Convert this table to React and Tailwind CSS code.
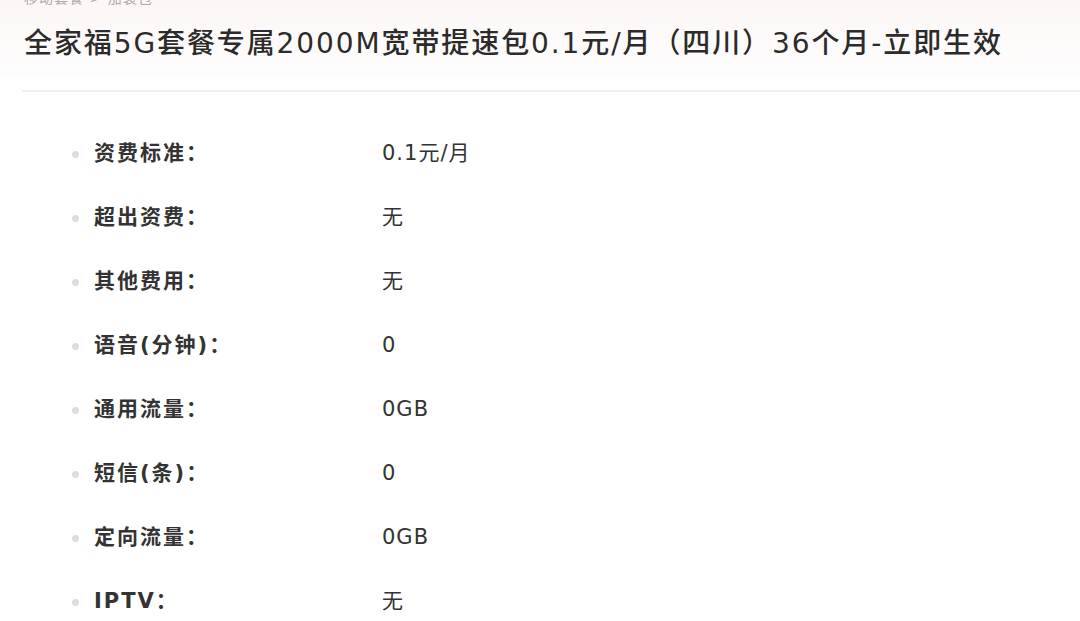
import React from 'react';

const rows = [
  { label: '资费标准：', value: '0.1元/月' },
  { label: '超出资费：', value: '无' },
  { label: '其他费用：', value: '无' },
  { label: '语音(分钟)：', value: '0' },
  { label: '通用流量：', value: '0GB' },
  { label: '短信(条)：', value: '0' },
  { label: '定向流量：', value: '0GB' },
  { label: 'IPTV：', value: '无' },
];

function App() {
  return (
    <div
      className="w-[1080px] h-[621px] overflow-hidden bg-white text-[#333]"
      style={{ fontFamily: '"DejaVu Sans", "Noto Sans CJK SC", sans-serif' }}
    >
      {/* Header */}
      <div className="h-[90px] bg-gradient-to-b from-[#fcf6f4] to-[#fefdfd] pl-[24px] -mt-[12px]">
        <div className="text-[14px] leading-[20px] text-[#aaa] tracking-[1px]">移动套餐 &gt; 加装包</div>
        <h1 className="mt-[18px] text-[28px] leading-[36px] font-medium tracking-[1.9px] text-[#2b2b2b] whitespace-nowrap">
          全家福5G套餐专属2000M宽带提速包0.1元/月（四川）36个月-立即生效
        </h1>
      </div>
      <div className="ml-[22px] h-[2px] bg-[#efefef] mt-[12px]" />

      {/* Detail list */}
      <ul className="pt-[30px]">
        {rows.map((row) => (
          <li key={row.label} className="h-[64px] flex items-center pl-[72px]">
            <span className="w-[7px] h-[7px] rounded-full bg-[#dcdcdc] mr-[15px]" />
            <span className="w-[288px] text-[21px] font-bold tracking-[2px] text-[#333]">{row.label}</span>
            <span className="text-[21px] tracking-[1px] text-[#333]">{row.value}</span>
          </li>
        ))}
      </ul>
    </div>
  );
}

export default App;
